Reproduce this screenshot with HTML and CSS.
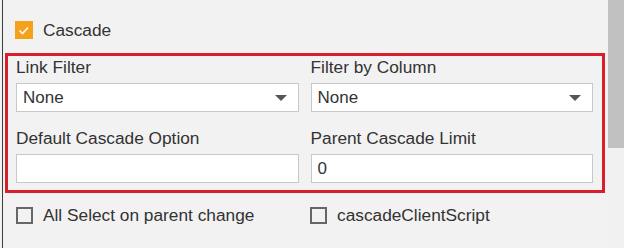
FILE: index.html
```html
<!DOCTYPE html>
<html lang="en">
<head>
    <meta charset="UTF-8">
    <title>Cascade Settings</title>
    <link rel="stylesheet" href="styles.css">
</head>
<body>
    <div class="panel">
        <div class="content">
            <label class="check-row cascade">
                <span class="box checked">
                    <svg width="18" height="18" viewBox="0 0 18 18"><polyline points="4.5,9.5 7.5,12.5 13,6.5" fill="none" stroke="#fff" stroke-width="1.6"/></svg>
                </span>
                Cascade
            </label>
            <div class="group">
                <div class="field">
                    <div class="label">Link Filter</div>
                    <div class="input select">None<span class="caret"></span></div>
                </div>
                <div class="field">
                    <div class="label">Filter by Column</div>
                    <div class="input select">None<span class="caret"></span></div>
                </div>
                <div class="field">
                    <div class="label">Default Cascade Option</div>
                    <div class="input"></div>
                </div>
                <div class="field">
                    <div class="label">Parent Cascade Limit</div>
                    <div class="input">0</div>
                </div>
            </div>
            <div class="options">
                <label class="check-row"><span class="box"></span>All Select on parent change</label>
                <label class="check-row"><span class="box"></span>cascadeClientScript</label>
            </div>
        </div>
        <div class="scrollbar"><div class="thumb"></div></div>
    </div>
</body>
</html>
```

FILE: styles.css
```css
body {
    margin: 0;
    background: #f2f2f2;
    font-family: "Liberation Sans", Arial, sans-serif;
    font-size: 17.3px;
    color: #333;
}
.panel {
    display: flex;
    height: 248px;
}
.content {
    flex: 1;
    margin-left: 2px;
    border-left: 1px solid #3c3c3c;
}
.check-row {
    display: flex;
    align-items: center;
    gap: 10px;
    height: 20px;
    line-height: 20px;
}
.cascade {
    margin-top: 20px;
    padding-left: 12px;
}
.box {
    width: 17px;
    height: 17px;
    box-sizing: border-box;
    border: 2px solid #666;
    background: transparent;
}
.box.checked {
    width: 18px;
    height: 18px;
    border: none;
    background: #f6a11c;
}
.box svg {
    display: block;
}
.group {
    margin: 13px 3px 0 2px;
    border: 3px solid #da1f2c;
    padding: 1px 9px 7px 8px;
    display: grid;
    grid-template-columns: 1fr 1fr;
    column-gap: 12px;
    row-gap: 16px;
}
.label {
    line-height: 20px;
    margin-bottom: 6px;
}
.input {
    height: 29px;
    box-sizing: border-box;
    border: 1px solid #c8c8c8;
    background: #fff;
    padding: 0 11px 0 6px;
    font-size: 17px;
    line-height: 27px;
}
.select {
    display: flex;
    align-items: center;
    justify-content: space-between;
}
.caret {
    width: 0;
    height: 0;
    border-left: 6px solid transparent;
    border-right: 6px solid transparent;
    border-top: 6px solid #555;
}
.options {
    margin-top: 12px;
    padding-left: 13px;
    display: grid;
    grid-template-columns: 282px 1fr;
    column-gap: 12px;
}
.scrollbar {
    width: 16px;
    background: #f1f1f1;
}
.thumb {
    height: 148px;
    background: #c1c1c1;
}
```
